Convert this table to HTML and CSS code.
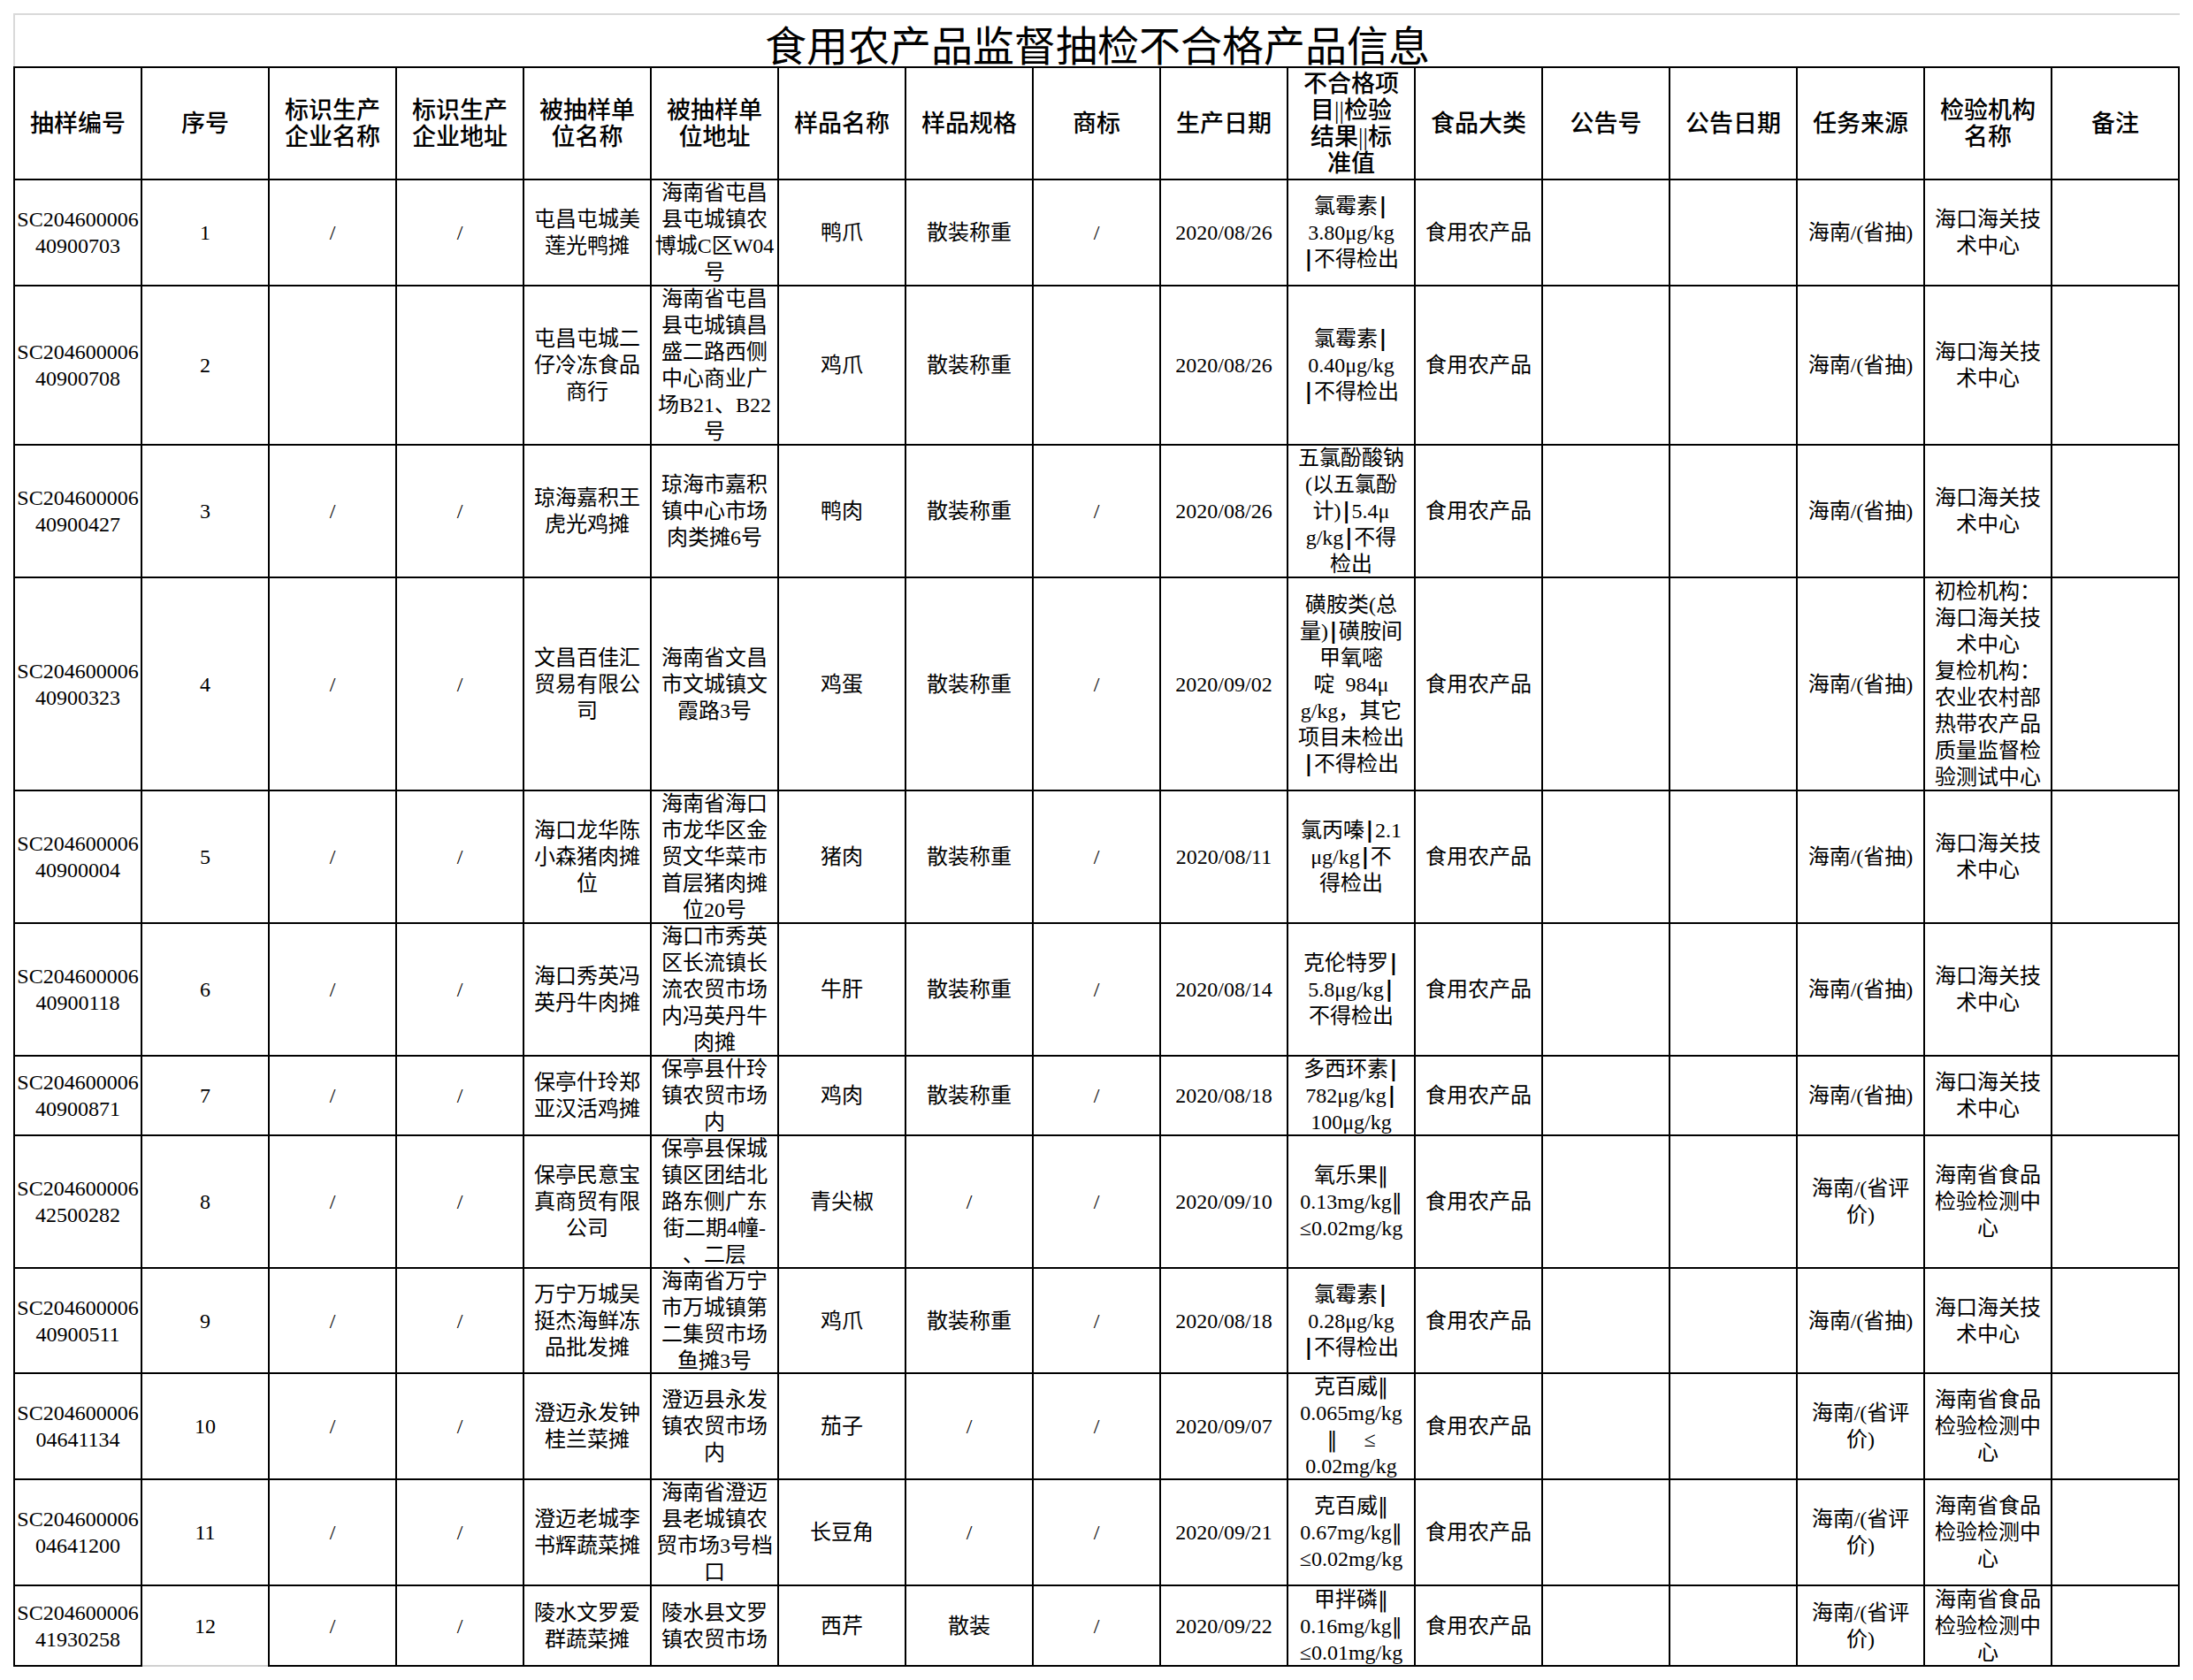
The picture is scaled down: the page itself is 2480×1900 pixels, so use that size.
FILE: index.html
```html
<!DOCTYPE html>
<html lang="zh-CN">
<head>
<meta charset="utf-8">
<title>食用农产品监督抽检不合格产品信息</title>
<link rel="stylesheet" href="styles.css">
</head>
<body>
<div class="page">
  <div class="title">食用农产品监督抽检不合格产品信息</div>
  <div class="sheet">
    <div class="c h">抽样编号</div>
    <div class="c h">序号</div>
    <div class="c h">标识生产<br>企业名称</div>
    <div class="c h">标识生产<br>企业地址</div>
    <div class="c h">被抽样单<br>位名称</div>
    <div class="c h">被抽样单<br>位地址</div>
    <div class="c h">样品名称</div>
    <div class="c h">样品规格</div>
    <div class="c h">商标</div>
    <div class="c h">生产日期</div>
    <div class="c h">不合格项<br>目||检验<br>结果||标<br>准值</div>
    <div class="c h">食品大类</div>
    <div class="c h">公告号</div>
    <div class="c h">公告日期</div>
    <div class="c h">任务来源</div>
    <div class="c h">检验机构<br>名称</div>
    <div class="c h">备注</div>

    <div class="c">SC204600006<br>40900703</div>
    <div class="c">1</div>
    <div class="c">/</div>
    <div class="c">/</div>
    <div class="c">屯昌屯城美<br>莲光鸭摊</div>
    <div class="c">海南省屯昌<br>县屯城镇农<br>博城C区W04<br>号</div>
    <div class="c">鸭爪</div>
    <div class="c">散装称重</div>
    <div class="c">/</div>
    <div class="c">2020/08/26</div>
    <div class="c"><span class="v">氯霉素<span class="bar">|</span><br>3.80μg/kg<br><span class="bar">|</span>不得检出</span></div>
    <div class="c">食用农产品</div>
    <div class="c"></div>
    <div class="c"></div>
    <div class="c">海南/(省抽)</div>
    <div class="c">海口海关技<br>术中心</div>
    <div class="c"></div>

    <div class="c">SC204600006<br>40900708</div>
    <div class="c">2</div>
    <div class="c"></div>
    <div class="c"></div>
    <div class="c">屯昌屯城二<br>仔冷冻食品<br>商行</div>
    <div class="c">海南省屯昌<br>县屯城镇昌<br>盛二路西侧<br>中心商业广<br>场B21、B22<br>号</div>
    <div class="c">鸡爪</div>
    <div class="c">散装称重</div>
    <div class="c"></div>
    <div class="c">2020/08/26</div>
    <div class="c"><span class="v">氯霉素<span class="bar">|</span><br>0.40μg/kg<br><span class="bar">|</span>不得检出</span></div>
    <div class="c">食用农产品</div>
    <div class="c"></div>
    <div class="c"></div>
    <div class="c">海南/(省抽)</div>
    <div class="c">海口海关技<br>术中心</div>
    <div class="c"></div>

    <div class="c">SC204600006<br>40900427</div>
    <div class="c">3</div>
    <div class="c">/</div>
    <div class="c">/</div>
    <div class="c">琼海嘉积王<br>虎光鸡摊</div>
    <div class="c">琼海市嘉积<br>镇中心市场<br>肉类摊6号</div>
    <div class="c">鸭肉</div>
    <div class="c">散装称重</div>
    <div class="c">/</div>
    <div class="c">2020/08/26</div>
    <div class="c"><span class="v">五氯酚酸钠<br>(以五氯酚<br>计)<span class="bar">|</span>5.4μ<br>g/kg<span class="bar">|</span>不得<br>检出</span></div>
    <div class="c">食用农产品</div>
    <div class="c"></div>
    <div class="c"></div>
    <div class="c">海南/(省抽)</div>
    <div class="c">海口海关技<br>术中心</div>
    <div class="c"></div>

    <div class="c">SC204600006<br>40900323</div>
    <div class="c">4</div>
    <div class="c">/</div>
    <div class="c">/</div>
    <div class="c">文昌百佳汇<br>贸易有限公<br>司</div>
    <div class="c">海南省文昌<br>市文城镇文<br>霞路3号</div>
    <div class="c">鸡蛋</div>
    <div class="c">散装称重</div>
    <div class="c">/</div>
    <div class="c">2020/09/02</div>
    <div class="c"><span class="v">磺胺类(总<br>量)<span class="bar">|</span>磺胺间<br>甲氧嘧<br>啶&nbsp; 984μ<br>g/kg，其它<br>项目未检出<br><span class="bar">|</span>不得检出</span></div>
    <div class="c">食用农产品</div>
    <div class="c"></div>
    <div class="c"></div>
    <div class="c">海南/(省抽)</div>
    <div class="c">初检机构：<br>海口海关技<br>术中心<br>复检机构：<br>农业农村部<br>热带农产品<br>质量监督检<br>验测试中心</div>
    <div class="c"></div>

    <div class="c">SC204600006<br>40900004</div>
    <div class="c">5</div>
    <div class="c">/</div>
    <div class="c">/</div>
    <div class="c">海口龙华陈<br>小森猪肉摊<br>位</div>
    <div class="c">海南省海口<br>市龙华区金<br>贸文华菜市<br>首层猪肉摊<br>位20号</div>
    <div class="c">猪肉</div>
    <div class="c">散装称重</div>
    <div class="c">/</div>
    <div class="c">2020/08/11</div>
    <div class="c"><span class="v">氯丙嗪<span class="bar">|</span>2.1<br>μg/kg<span class="bar">|</span>不<br>得检出</span></div>
    <div class="c">食用农产品</div>
    <div class="c"></div>
    <div class="c"></div>
    <div class="c">海南/(省抽)</div>
    <div class="c">海口海关技<br>术中心</div>
    <div class="c"></div>

    <div class="c">SC204600006<br>40900118</div>
    <div class="c">6</div>
    <div class="c">/</div>
    <div class="c">/</div>
    <div class="c">海口秀英冯<br>英丹牛肉摊</div>
    <div class="c">海口市秀英<br>区长流镇长<br>流农贸市场<br>内冯英丹牛<br>肉摊</div>
    <div class="c">牛肝</div>
    <div class="c">散装称重</div>
    <div class="c">/</div>
    <div class="c">2020/08/14</div>
    <div class="c"><span class="v">克伦特罗<span class="bar">|</span><br>5.8μg/kg<span class="bar">|</span><br>不得检出</span></div>
    <div class="c">食用农产品</div>
    <div class="c"></div>
    <div class="c"></div>
    <div class="c">海南/(省抽)</div>
    <div class="c">海口海关技<br>术中心</div>
    <div class="c"></div>

    <div class="c">SC204600006<br>40900871</div>
    <div class="c">7</div>
    <div class="c">/</div>
    <div class="c">/</div>
    <div class="c">保亭什玲郑<br>亚汉活鸡摊</div>
    <div class="c">保亭县什玲<br>镇农贸市场<br>内</div>
    <div class="c">鸡肉</div>
    <div class="c">散装称重</div>
    <div class="c">/</div>
    <div class="c">2020/08/18</div>
    <div class="c"><span class="v">多西环素<span class="bar">|</span><br>782μg/kg<span class="bar">|</span><br>100μg/kg</span></div>
    <div class="c">食用农产品</div>
    <div class="c"></div>
    <div class="c"></div>
    <div class="c">海南/(省抽)</div>
    <div class="c">海口海关技<br>术中心</div>
    <div class="c"></div>

    <div class="c">SC204600006<br>42500282</div>
    <div class="c">8</div>
    <div class="c">/</div>
    <div class="c">/</div>
    <div class="c">保亭民意宝<br>真商贸有限<br>公司</div>
    <div class="c">保亭县保城<br>镇区团结北<br>路东侧广东<br>街二期4幢-<br>、二层</div>
    <div class="c">青尖椒</div>
    <div class="c">/</div>
    <div class="c">/</div>
    <div class="c">2020/09/10</div>
    <div class="c"><span class="v">氧乐果<span class="dbar">‖</span><br>0.13mg/kg<span class="dbar">‖</span><br>≤0.02mg/kg</span></div>
    <div class="c">食用农产品</div>
    <div class="c"></div>
    <div class="c"></div>
    <div class="c">海南/(省评<br>价)</div>
    <div class="c">海南省食品<br>检验检测中<br>心</div>
    <div class="c"></div>

    <div class="c">SC204600006<br>40900511</div>
    <div class="c">9</div>
    <div class="c">/</div>
    <div class="c">/</div>
    <div class="c">万宁万城吴<br>挺杰海鲜冻<br>品批发摊</div>
    <div class="c">海南省万宁<br>市万城镇第<br>二集贸市场<br>鱼摊3号</div>
    <div class="c">鸡爪</div>
    <div class="c">散装称重</div>
    <div class="c">/</div>
    <div class="c">2020/08/18</div>
    <div class="c"><span class="v">氯霉素<span class="bar">|</span><br>0.28μg/kg<br><span class="bar">|</span>不得检出</span></div>
    <div class="c">食用农产品</div>
    <div class="c"></div>
    <div class="c"></div>
    <div class="c">海南/(省抽)</div>
    <div class="c">海口海关技<br>术中心</div>
    <div class="c"></div>

    <div class="c">SC204600006<br>04641134</div>
    <div class="c">10</div>
    <div class="c">/</div>
    <div class="c">/</div>
    <div class="c">澄迈永发钟<br>桂兰菜摊</div>
    <div class="c">澄迈县永发<br>镇农贸市场<br>内</div>
    <div class="c">茄子</div>
    <div class="c">/</div>
    <div class="c">/</div>
    <div class="c">2020/09/07</div>
    <div class="c"><span class="v">克百威<span class="dbar">‖</span><br>0.065mg/kg<br><span class="dbar">‖</span>&nbsp;&nbsp;&nbsp;&nbsp;&nbsp;≤<br>0.02mg/kg</span></div>
    <div class="c">食用农产品</div>
    <div class="c"></div>
    <div class="c"></div>
    <div class="c">海南/(省评<br>价)</div>
    <div class="c">海南省食品<br>检验检测中<br>心</div>
    <div class="c"></div>

    <div class="c">SC204600006<br>04641200</div>
    <div class="c">11</div>
    <div class="c">/</div>
    <div class="c">/</div>
    <div class="c">澄迈老城李<br>书辉蔬菜摊</div>
    <div class="c">海南省澄迈<br>县老城镇农<br>贸市场3号档<br>口</div>
    <div class="c">长豆角</div>
    <div class="c">/</div>
    <div class="c">/</div>
    <div class="c">2020/09/21</div>
    <div class="c"><span class="v">克百威<span class="dbar">‖</span><br>0.67mg/kg<span class="dbar">‖</span><br>≤0.02mg/kg</span></div>
    <div class="c">食用农产品</div>
    <div class="c"></div>
    <div class="c"></div>
    <div class="c">海南/(省评<br>价)</div>
    <div class="c">海南省食品<br>检验检测中<br>心</div>
    <div class="c"></div>

    <div class="c last">SC204600006<br>41930258</div>
    <div class="c last soft">12</div>
    <div class="c last">/</div>
    <div class="c last">/</div>
    <div class="c last">陵水文罗爱<br>群蔬菜摊</div>
    <div class="c last">陵水县文罗<br>镇农贸市场</div>
    <div class="c last">西芹</div>
    <div class="c last">散装</div>
    <div class="c last">/</div>
    <div class="c last">2020/09/22</div>
    <div class="c last"><span class="v">甲拌磷<span class="dbar">‖</span><br>0.16mg/kg<span class="dbar">‖</span><br>≤0.01mg/kg</span></div>
    <div class="c last">食用农产品</div>
    <div class="c last"></div>
    <div class="c last"></div>
    <div class="c last">海南/(省评<br>价)</div>
    <div class="c last">海南省食品<br>检验检测中<br>心</div>
    <div class="c last"></div>
  </div>
</div>
</body>
</html>
```

FILE: styles.css
```css
* {
  box-sizing: border-box;
}

body {
  margin: 0;
  background: #ffffff;
  color: #000000;
  font-family: "Liberation Serif", "Noto Sans CJK SC", serif;
}

.page {
  padding: 15px 0 0 15px;
}

.title {
  width: 2450px;
  height: 60px;
  border-top: 2px solid #d9d9d9;
  border-left: 2px solid #d9d9d9;
  display: flex;
  align-items: center;
  justify-content: center;
  padding-top: 4px;
  font-family: "Noto Sans CJK SC", sans-serif;
  font-size: 47px;
  font-weight: 400;
  line-height: 1;
  white-space: nowrap;
}

.sheet {
  display: grid;
  width: 2450px;
  grid-template-columns: repeat(17, 142px);
  grid-template-rows: 125px 118px 178px 148px 239px 148px 148px 88px 148px 117px 118px 118px 91px;
  gap: 2px;
  background: #000000;
  border: 2px solid #000000;
  border-bottom: 0;
}

.c {
  background: #ffffff;
  display: flex;
  align-items: center;
  justify-content: center;
  text-align: center;
  font-size: 24px;
  line-height: 30px;
  white-space: nowrap;
}

.v {
  display: block;
}

.h {
  font-weight: 500;
  font-size: 27px;
  line-height: 30px;
}

.bar {
  display: inline-block;
  width: 12px;
  font-family: "DejaVu Sans", sans-serif;
  font-weight: 700;
}

.dbar {
  display: inline-block;
  width: 12px;
  font-family: "DejaVu Serif", serif;
}

.last {
  border-bottom: 2px solid #000000;
}

.soft {
  border-bottom-color: #d0d0d0;
}
```
